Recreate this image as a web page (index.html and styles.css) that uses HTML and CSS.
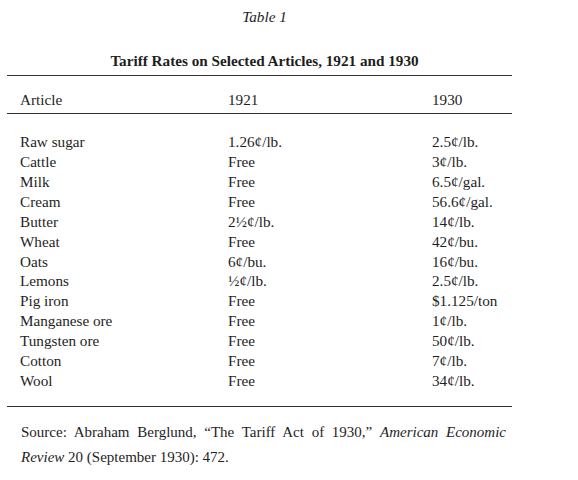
FILE: index.html
```html
<!DOCTYPE html>
<html>
<head>
<meta charset="utf-8">
<link rel="stylesheet" href="styles.css">
</head>
<body>
<div class="page">
  <div class="caption">Table 1</div>
  <div class="title">Tariff Rates on Selected Articles, 1921 and 1930</div>
  <div class="table">
    <div class="row head">
      <div class="c1">Article</div>
      <div class="c2">1921</div>
      <div class="c3">1930</div>
    </div>
    <div class="body">
      <div class="row"><div class="c1">Raw sugar</div><div class="c2">1.26¢/lb.</div><div class="c3">2.5¢/lb.</div></div>
      <div class="row"><div class="c1">Cattle</div><div class="c2">Free</div><div class="c3">3¢/lb.</div></div>
      <div class="row"><div class="c1">Milk</div><div class="c2">Free</div><div class="c3">6.5¢/gal.</div></div>
      <div class="row"><div class="c1">Cream</div><div class="c2">Free</div><div class="c3">56.6¢/gal.</div></div>
      <div class="row"><div class="c1">Butter</div><div class="c2">2½¢/lb.</div><div class="c3">14¢/lb.</div></div>
      <div class="row"><div class="c1">Wheat</div><div class="c2">Free</div><div class="c3">42¢/bu.</div></div>
      <div class="row"><div class="c1">Oats</div><div class="c2">6¢/bu.</div><div class="c3">16¢/bu.</div></div>
      <div class="row"><div class="c1">Lemons</div><div class="c2">½¢/lb.</div><div class="c3">2.5¢/lb.</div></div>
      <div class="row"><div class="c1">Pig iron</div><div class="c2">Free</div><div class="c3">$1.125/ton</div></div>
      <div class="row"><div class="c1">Manganese ore</div><div class="c2">Free</div><div class="c3">1¢/lb.</div></div>
      <div class="row"><div class="c1">Tungsten ore</div><div class="c2">Free</div><div class="c3">50¢/lb.</div></div>
      <div class="row"><div class="c1">Cotton</div><div class="c2">Free</div><div class="c3">7¢/lb.</div></div>
      <div class="row"><div class="c1">Wool</div><div class="c2">Free</div><div class="c3">34¢/lb.</div></div>
    </div>
  </div>
  <p class="source">Source: Abraham Berglund, “The Tariff Act of 1930,” <i>American Economic</i> <i>Review</i> 20 (September 1930): 472.</p>
</div>
</body>
</html>
```

FILE: styles.css
```css
html, body {
  margin: 0;
  padding: 0;
  background: #fff;
}
body {
  font-family: "Liberation Serif", "Times New Roman", serif;
  color: #1e1e1e;
  font-size: 15.2px;
}
.page {
  width: 505px;
  padding-left: 7px;
  padding-top: 7px;
}
.caption {
  font-style: italic;
  text-align: center;
  line-height: 20px;
  padding-left: 10px;
}
.title {
  font-weight: bold;
  text-align: center;
  line-height: 20px;
  margin-top: 24px;
  margin-bottom: 4px;
  padding-left: 10px;
}
.table {
  border-top: 1.5px solid #333;
  border-bottom: 1.5px solid #333;
}
.row {
  display: grid;
  grid-template-columns: 208px 204px 1fr;
  line-height: 20px;
  padding-left: 13px;
}
.head {
  padding-top: 14px;
  padding-bottom: 3px;
  border-bottom: 1.5px solid #333;
}
.body {
  padding-top: 18px;
  padding-bottom: 15px;
}
.body .row {
  line-height: 19.92px;
}
.source {
  margin: 13px 0 0 14px;
  width: 485px;
  text-align: justify;
  line-height: 25px;
  font-size: 15px;
}
```
